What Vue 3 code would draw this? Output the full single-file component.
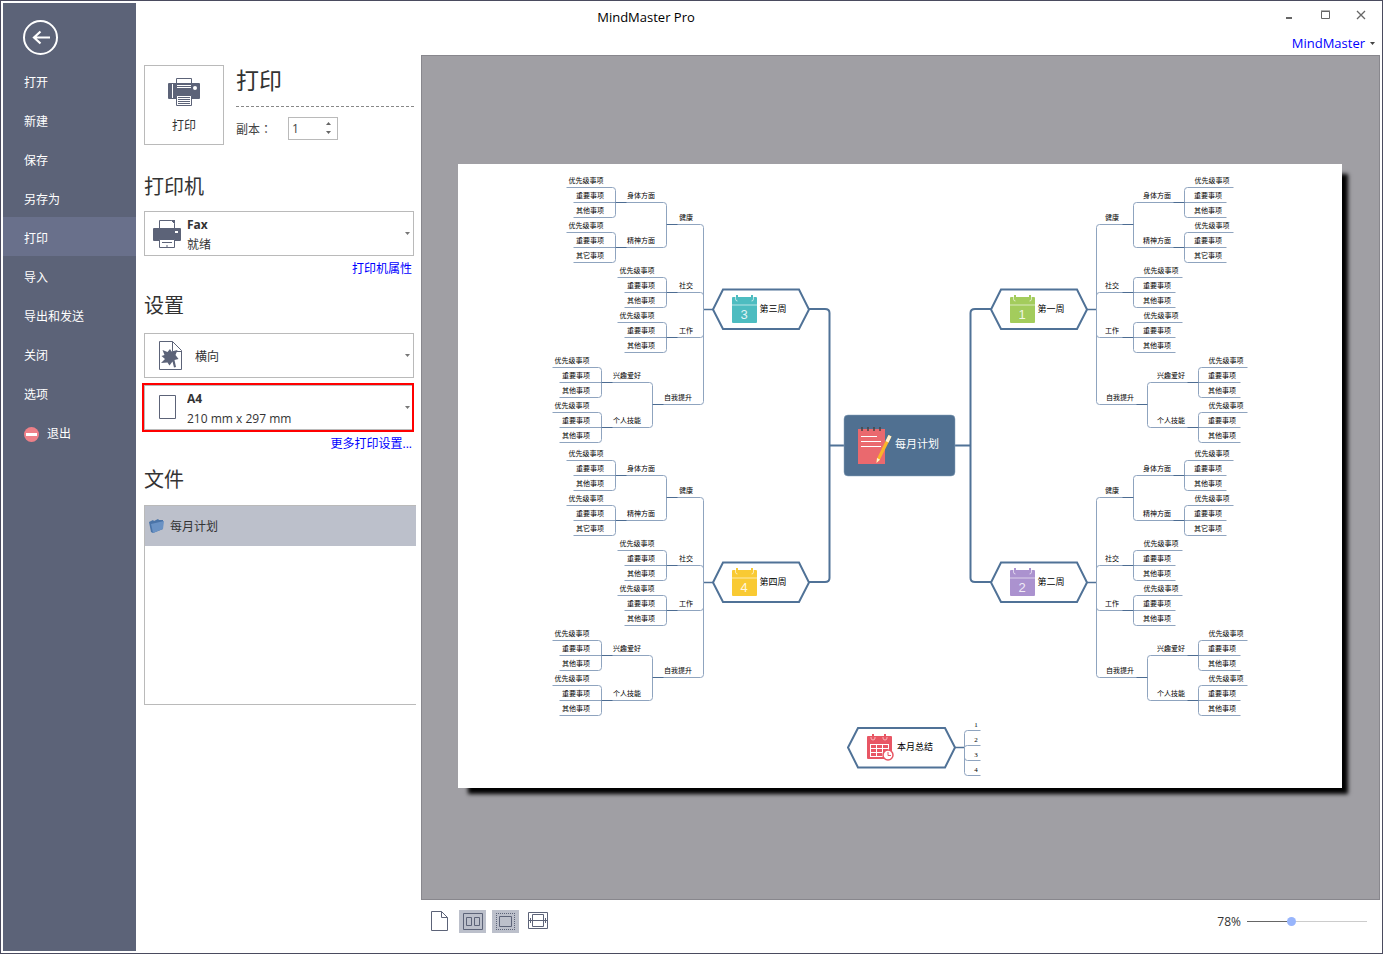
<script setup>
import { ref } from 'vue'

const menu = ['打开', '新建', '保存', '另存为', '打印', '导入', '导出和发送', '关闭', '选项']
const active = ref('打印')
const copies = ref(1)
const zoom = ref(78)

const step = (n) => { copies.value = Math.max(1, copies.value + n) }

/* ---- mind map ---- */
const leaves = (third = '其他事项') => ['优先级事项', '重要事项', third].map((text) => ({ text }))
const topics = [
  { text: '健康', kids: [{ text: '身体方面', kids: leaves() }, { text: '精神方面', kids: leaves('其它事项') }] },
  { text: '社交', kids: leaves() },
  { text: '工作', kids: leaves() },
  { text: '自我提升', kids: [{ text: '兴趣爱好', kids: leaves() }, { text: '个人技能', kids: leaves() }] },
]
const ROW = 15
const widths = { leaf: { 4: 42, 5: 49 }, inner: { 2: 37, 4: 51 } }

function link(x, y, dir, childY, end) {
  if (childY === y) return `M${x} ${y}H${end}`
  const s = childY > y ? 1 : -1
  return `M${x} ${y}V${childY - 3 * s}Q${x} ${childY} ${x + 3 * dir} ${childY}H${end}`
}

function branch(rootX, rootY, dir) {
  const lines = []
  const tails = []
  const labels = []
  let next = rootY - 122
  const place = (node, x) => {
    const width = widths[node.kids ? 'inner' : 'leaf'][node.text.length]
    const end = x + dir * width
    let y
    if (node.kids) {
      const ys = node.kids.map((k) => place(k, end))
      y = Math.floor((ys[0].y + ys[ys.length - 1].y) / 2)
      ys.forEach((k) => lines.push(link(end, y, dir, k.y, k.end)))
      tails.push(`M${end - dir * 11} ${y}H${end}`)
    } else {
      y = next
      next += ROW
    }
    const inset = dir > 0 ? 9 : 10
    labels.push({ text: node.text, x: x + dir * (inset + Math.round(node.text.length * 3.7)), y: y - 4 })
    return { y, end }
  }
  topics.forEach((t) => {
    const r = place(t, rootX)
    lines.push(link(rootX, rootY, dir, r.y, r.end))
  })
  return { lines: lines.join(''), tails: tails.join(''), labels }
}

const weeks = [
  { no: 1, name: '第一周', x: 991, y: 309, dir: 1, color: '#a3cc5c' },
  { no: 2, name: '第二周', x: 991, y: 582, dir: 1, color: '#ab92cf' },
  { no: 3, name: '第三周', x: 713, y: 309, dir: -1, color: '#4dbcc0' },
  { no: 4, name: '第四周', x: 713, y: 582, dir: -1, color: '#f9ca33' },
].map((w) => ({ ...w, tree: branch(w.dir > 0 ? 1096 : 703, w.y, w.dir) }))
</script>

<template>
  <div class="window">
    <header class="titlebar">
      <h1 class="app-title">MindMaster Pro</h1>
      <div class="win-controls">
        <button type="button" aria-label="最小化"><svg width="12" height="12" viewBox="0 0 12 12"><path d="M3 9h6" stroke="#666" stroke-width="2" /></svg></button>
        <button type="button" aria-label="最大化"><svg width="12" height="12" viewBox="0 0 12 12"><path d="M2.500 2.500h8v7h-8z M2 2h9" fill="none" stroke="#666" /></svg></button>
        <button type="button" aria-label="关闭窗口"><svg width="12" height="12" viewBox="0 0 12 12"><path d="M2 2l8 8M10 2l-8 8" stroke="#666" stroke-width="1.300" /></svg></button>
      </div>
    </header>

    <nav class="sidebar">
      <button class="back" type="button" aria-label="返回">
        <svg width="35" height="35" viewBox="0 0 35 35" fill="none" stroke="#fff">
          <circle cx="17.500" cy="17.500" r="16.500" stroke-width="2" />
          <path d="M27 17.500H11M17.500 11.500l-6.500 6 6.500 6" stroke-width="2.200" />
        </svg>
      </button>
      <ul class="menu">
        <li v-for="m in menu" :key="m">
          <button type="button" :class="{ active: m === active }" @click="active = m">{{ m }}</button>
        </li>
        <li>
          <button type="button">
            <svg width="15" height="15" viewBox="0 0 15 15"><circle cx="7.500" cy="7.500" r="7.500" fill="#ee8088" /><path d="M2 6h11v3H2z" fill="#fff" /></svg>
            退出
          </button>
        </li>
      </ul>
    </nav>

    <main class="main">
      <section class="panel">
        <div class="print-head">
          <button class="print-btn" type="button">
            <svg width="32" height="28" viewBox="0 0 32 28">
              <path d="M8.500 6V.5h15V6" fill="#fff" stroke="#5c6378" />
              <rect y="5" width="32" height="16" rx="1" fill="#5c6378" />
              <path d="M4.500 6v14M9 7.500h14M9 9.500h14" stroke="#fff" />
              <circle cx="27" cy="10" r="2" fill="#fff" />
              <path d="M8.500 17.500h15v10h-15z" fill="#fff" stroke="#5c6378" />
              <path d="M10 19.500h12M10 21.500h12M10 23.500h12M10 25.500h12" stroke="#5c6378" />
            </svg>
            打印
          </button>
          <div class="print-info">
            <h2>打印</h2>
            <div class="copies">
              <label for="copies">副本：</label>
              <div class="spin">
                <input id="copies" v-model.number="copies" type="text" inputmode="numeric" />
                <div class="spin-btns">
                  <button type="button" aria-label="增加" @click="step(1)"><svg width="5" height="3" viewBox="0 0 5 3"><path d="M0 3L2.500 0 5 3z" fill="#666" /></svg></button>
                  <button type="button" aria-label="减少" @click="step(-1)"><svg width="5" height="3" viewBox="0 0 5 3"><path d="M0 0L2.500 3 5 0z" fill="#666" /></svg></button>
                </div>
              </div>
            </div>
          </div>
        </div>

        <h3>打印机</h3>
        <label class="picker printer">
          <svg width="28" height="28" viewBox="0 0 28 28">
            <path d="M6.500 9V.5h12l3 3V9" fill="#fff" stroke="#5c6378" />
            <path d="M18 0h4v4z" fill="#5c6378" />
            <rect y="8" width="28" height="13" rx="1" fill="#5c6378" />
            <path d="M22 11h3v2h-3z" fill="#fff" />
            <path d="M6.500 19.500h15v8h-15z" fill="#fff" stroke="#5c6378" />
            <path d="M9 22.500h10M13 26h2" stroke="#5c6378" />
          </svg>
          <span class="picker-text">
            <select aria-label="打印机"><option>Fax</option></select>
            <span>就绪</span>
          </span>
          <svg class="caret" width="5" height="3" viewBox="0 0 5 3"><path d="M0 0h5L2.500 3z" /></svg>
        </label>
        <a class="more" href="#printer">打印机属性</a>

        <h3>设置</h3>
        <label class="picker orient">
          <svg width="23" height="29" viewBox="0 0 23 29">
            <path d="M.5.5h13l9 9v19H.5z" fill="#fff" stroke="#5c6378" />
            <path d="M13.500.5v10h9" fill="none" stroke="#5c6378" />
            <path d="M3.500 9l5 2L11 8l1.500 2.500L18.500 9l-2 5 3 4-4 1L17 26l-2 .5-1.500-6-3 4-2-3L2 22l4-4-3.500-3 3-1z" fill="#5c6378" />
          </svg>
          <span class="picker-text">
            <select class="plain" aria-label="方向"><option>横向</option><option>纵向</option></select>
          </span>
          <svg class="caret" width="5" height="3" viewBox="0 0 5 3"><path d="M0 0h5L2.500 3z" /></svg>
        </label>
        <div class="highlight">
          <label class="picker paper">
            <svg width="17" height="25" viewBox="0 0 17 25"><path d="M.5.5h16v23H.5z" fill="#fff" stroke="#5c6378" /></svg>
            <span class="picker-text">
              <select aria-label="纸张大小"><option>A4</option></select>
              <span>210 mm x 297 mm</span>
            </span>
            <svg class="caret" width="5" height="3" viewBox="0 0 5 3"><path d="M0 0h5L2.500 3z" /></svg>
          </label>
        </div>
        <a class="more" href="#settings">更多打印设置...</a>

        <h3>文件</h3>
        <ul class="files">
          <li>
            <svg width="15" height="14" viewBox="0 0 15 14">
              <path d="M0 3l4-2 1 1 4-2 1 1h4v9L4 14 2 13z" fill="#4a74a8" />
              <path d="M2 5l13-3-1 8L4 14z" fill="#6a92c4" />
            </svg>
            <span>每月计划</span>
          </li>
        </ul>
      </section>

      <section class="view">
        <div class="account"><button type="button">MindMaster <svg width="5" height="3" viewBox="0 0 5 3"><path d="M0 0h5L2.500 3z" fill="#444" /></svg></button></div>
        <div class="preview">
          <svg class="sheet" viewBox="458 164 884 624" role="img" aria-label="每月计划">
            <!-- branch lines -->
            <g transform="translate(.5 .5)" fill="none">
              <g v-for="w in weeks" :key="w.no">
                <path class="thin" :d="w.tree.lines" />
                <path class="tail" :d="w.tree.tails" />
              </g>
              <path class="thin" d="M964 747V733Q964 730 967 730H980M964 747Q964 745 967 745H980M964 747V757Q964 760 967 760H980M964 747V772Q964 775 967 775H980" />
            </g>
            <g class="thick">
              <path d="M991 309H975Q970.500 309 970.500 313V578Q970.500 582 975 582H991M955 445.500H970" />
              <path d="M809 309H825Q829.500 309 829.500 313V578Q829.500 582 825 582H809M845 445.500H830" />
              <path d="M1087 309.500H1096M1087 582.500H1096M713 309.500H704M713 582.500H704M955 747.500H964" class="stub" />
              <path d="M848 747.500L858 728H945L955 747.500 945 767.500H858z" />
            </g>
            <!-- branch labels -->
            <g v-for="w in weeks" :key="'l' + w.no" class="tiny">
              <text v-for="(l, i) in w.tree.labels" :key="i" :x="l.x" :y="l.y">{{ l.text }}</text>
            </g>
            <!-- week nodes -->
            <g v-for="w in weeks" :key="'n' + w.no" :transform="`translate(${w.x} ${w.y})`">
              <path class="hex" d="M0 .5L10 -19.500H86L96 .5 86 20H10z" />
              <rect x="19" y="-12" width="25" height="26" rx="1" :fill="w.color" />
              <path d="M24 -14v5M39 -14v5" :stroke="w.color" stroke-width="2" />
              <path d="M22.500 -12v2q0 2 2 2M40.500 -12v2q0 2 -2 2M19 -4h25" class="cal-line" />
              <text class="cal-no" x="31" y="10">{{ w.no }}</text>
              <text class="small" x="60" y="3">{{ w.name }}</text>
            </g>
            <!-- centre node -->
            <rect x="844" y="415" width="111" height="61" rx="4" fill="#507091" stroke="#86a0bb" stroke-width=".5" />
            <path d="M858 429h27v35h-27z" fill="#ea696e" />
            <path d="M862 427v4M868 427v4M874 427v4M880 427v4" stroke="#444" stroke-width="1.500" />
            <path d="M861 436.500h16M861 441.500h20M861 446.500h20" stroke="#fff" />
            <path d="M888.500 435l3 1.500-12 24-3 2 .5-4z" fill="#fab52a" />
            <path d="M888.500 435l3 1.500-3 6-3-1.500zM877 458l3 1.500-3.500 3.500z" fill="#fff0d0" />
            <text class="centre" x="917" y="448">每月计划</text>
            <!-- summary node -->
            <rect x="867" y="736" width="25" height="23" rx="1" fill="#e85664" />
            <path d="M873 734v5M885 734v5" stroke="#e85664" stroke-width="2" />
            <path d="M871 737v1q0 2 2 2t2-2v-1M883 737v1q0 2 2 2t2-2v-1" fill="none" stroke="#f8b5bb" />
            <path d="M870 744h19v13h-19z" fill="#fff" />
            <path d="M871 745h5v3h-5zM877 745h5v3h-5zM883 745h5v3h-5zM871 749h5v3h-5zM877 749h5v3h-5zM883 749h5v3h-5zM871 753h5v3h-5zM877 753h5v3h-5z" fill="#e85664" />
            <circle cx="888" cy="755" r="5" fill="#fff" stroke="#e85664" stroke-width="1.500" />
            <path d="M888 752v3.500h3" fill="none" stroke="#e85664" />
            <text class="small" x="915" y="750">本月总结</text>
            <g class="tiny num">
              <text v-for="n in 4" :key="n" x="976" :y="712 + n * 15">{{ n }}</text>
            </g>
          </svg>
        </div>
        <footer class="bar">
          <div class="modes">
            <button type="button" aria-label="单页"><svg width="17" height="21" viewBox="0 0 17 21"><path d="M.5.5h10l6 6v13H.5z M10.500.5v6h6" fill="#fff" stroke="#5c6378" /></svg></button>
            <button type="button" class="on" aria-label="双页"><svg width="21" height="17" viewBox="-1 0 21 17" fill="none" stroke="#5c6378"><path d="M.5.5h19v16H.5zM3.500 4.500h5v8h-5zM11.500 4.500h5v8h-5z" /></svg></button>
            <button type="button" class="on" aria-label="页边距"><svg width="21" height="17" viewBox="-1 0 21 17" fill="none" stroke="#5c6378"><path d="M0 .5h19M0 16.500h19M.5 2v14M18.500 2v14" stroke-dasharray="1 1" /><path d="M3.500 3.500h12v10h-12z" /></svg></button>
            <button type="button" aria-label="适合页面"><svg width="21" height="19" viewBox="0 0 21 19" fill="none" stroke="#5c6378"><path d="M.5.5h19v16H.5zM4.500 2.500h11v12h-11zM1 8.500h18M2.500 6v5M17.500 6v5" /></svg></button>
          </div>
          <div class="zoom">
            <label for="zoom">{{ zoom }}%</label>
            <input id="zoom" v-model.number="zoom" type="range" min="10" max="200" />
          </div>
        </footer>
      </section>
    </main>
  </div>
</template>

<style>
body { margin: 0; }
</style>

<style scoped>
.window {
  display: grid;
  grid-template-columns: 133px minmax(0, 1fr);
  grid-template-rows: 28px minmax(0, 1fr);
  box-sizing: border-box;
  min-height: 100vh;
  padding: 2px;
  border: 1px solid #4a4b5f;
  background: #fff;
  color: #333;
  font: 12px/20px "Open Sans", "Noto Sans CJK SC", sans-serif;
}
.window * { box-sizing: border-box; }
button {
  padding: 0;
  border: 0;
  background: none;
  color: inherit;
  font: inherit;
  cursor: pointer;
}
svg { display: block; flex: none; }
ul { margin: 0; padding: 0; list-style: none; }
h1, h2, h3 { margin: 0; font-weight: 400; }
a { color: #00f; text-decoration: none; }

.titlebar {
  grid-area: 1 / 1 / 2 / 3;
  z-index: 1;
  display: flex;
  align-items: center;
}
.app-title { flex: 1; padding-left: 6px; color: #000; font-size: 13px; text-align: center; }
.win-controls { display: flex; gap: 24px; padding: 0 13px 4px 0; }

.sidebar { grid-area: 1 / 1 / 3 / 2; z-index: 2; background: #5c6378; color: #fff; }
.back { display: block; margin: 17px 0 6px 20px; }
.menu button {
  display: flex;
  align-items: center;
  gap: 8px;
  width: 100%;
  height: 39px;
  padding: 5px 0 0 21px;
}
.menu .active { background: #69708b; }

.main { grid-area: 2 / 2 / 3 / 3; display: grid; grid-template-columns: 285px minmax(0, 1fr); }
.panel { padding: 34px 7px 0 8px; }
.print-head { display: flex; gap: 12px; }
.print-btn {
  display: flex;
  flex-direction: column;
  align-items: center;
  gap: 10px;
  width: 80px;
  height: 80px;
  padding-top: 12px;
  border: 1px solid #bababa;
}
.print-info { flex: 1; }
h2 { height: 42px; font-size: 23px; line-height: 30px; border-bottom: 1px dashed #888; }
.copies { display: flex; align-items: center; gap: 16px; margin-top: 10px; color: #444; }
.copies label { font-family: "Noto Sans CJK TC", sans-serif; }
.spin { display: flex; width: 50px; height: 23px; border: 1px solid #bababa; }
.spin input {
  flex: 1;
  min-width: 0;
  padding: 0 3px;
  border: 0;
  background: none;
  color: #444;
  font: inherit;
}
.spin-btns { display: flex; flex-direction: column; justify-content: space-between; width: 16px; padding: 4px 5px 5px; }
.spin-btns button { line-height: 0; }
h3 { font-size: 20px; line-height: 30px; }
.print-head + h3 { margin: 27px 0 9px; }
.picker {
  display: flex;
  align-items: center;
  height: 45px;
  padding: 0 3px 0 8px;
  border: 1px solid #bababa;
}
.picker + .more, .highlight + .more { display: block; width: fit-content; margin: 3px 2px 0 auto; }
.highlight + .more { margin-top: 2px; }
.more + h3 { margin: 12px 0; }
.picker-text { flex: 1; display: flex; flex-direction: column; padding: 2px 0 0 6px; }
.picker select {
  width: 100%;
  padding: 0;
  border: 0;
  appearance: none;
  background: none;
  color: #333;
  font: inherit;
  font-weight: 700;
}
.picker select.plain { font-weight: 400; }
.orient, .paper { padding-left: 14px; }
.orient .picker-text { padding-left: 13px; }
.paper .picker-text { padding-left: 11px; }
.caret { fill: #777; }
.highlight { margin: 5px 0 0 -2px; border: 2px solid #f00; }
.highlight .picker { border-right: 0; padding-right: 2px; }
.highlight + .more + h3 { margin: 11px 0 10px; }
.files {
  height: 200px;
  margin-right: -2px;
  border: 1px solid #bababa;
  border-right: 0;
}
.files li { display: flex; align-items: center; gap: 6px; height: 40px; padding-left: 4px; background: #bcc0cb; }
.files span { padding-top: 2px; }

.view { display: flex; flex-direction: column; }
.account { display: flex; justify-content: flex-end; height: 24px; padding-right: 5px; }
.account button { display: flex; align-items: center; gap: 5px; color: #00f; font-size: 13px; }
.preview {
  flex: 1;
  display: flex;
  align-items: center;
  padding: 0 37px 3px 36px;
  border: 1px solid #88878d;
  background: #a09fa4;
}
.sheet { flex: 1; min-width: 0; height: auto; background: #fff; box-shadow: 8px 8px 4px -2px #000; }
.thin { stroke: #8fa4bf; }
.tail { stroke: #4c6c92; }
.thick { fill: none; stroke: #507297; stroke-width: 2; }
.thick .stub { stroke-width: 1.5; }
.hex { fill: #fff; stroke: #507297; stroke-width: 2; }
.cal-line { fill: none; stroke: #fff; stroke-opacity: .6; }
.sheet text { text-anchor: middle; fill: #000; }
.tiny { font-size: 7px; }
.num { font-family: "Liberation Serif", serif; }
.small { font-size: 9px; }
.sheet .cal-no { fill: #fff; fill-opacity: .85; font: 13px "Liberation Sans", sans-serif; }
.sheet .centre { fill: #fff; font-size: 11px; }

.bar { display: flex; align-items: center; justify-content: space-between; height: 51px; padding: 0 13px 8px 5px; }
.modes { display: flex; gap: 6px; }
.modes button { display: grid; place-items: center; width: 27px; height: 23px; }
.modes .on { background: #bcc0cb; }
.zoom { display: flex; align-items: center; gap: 6px; }
.zoom input { appearance: none; width: 120px; height: 9px; margin: 0; background: linear-gradient(90deg, #666 36%, #ccc 36%) center / 100% 1px no-repeat; }
.zoom input::-webkit-slider-thumb { appearance: none; width: 9px; height: 9px; border-radius: 50%; background: #98b5fc; }
</style>
